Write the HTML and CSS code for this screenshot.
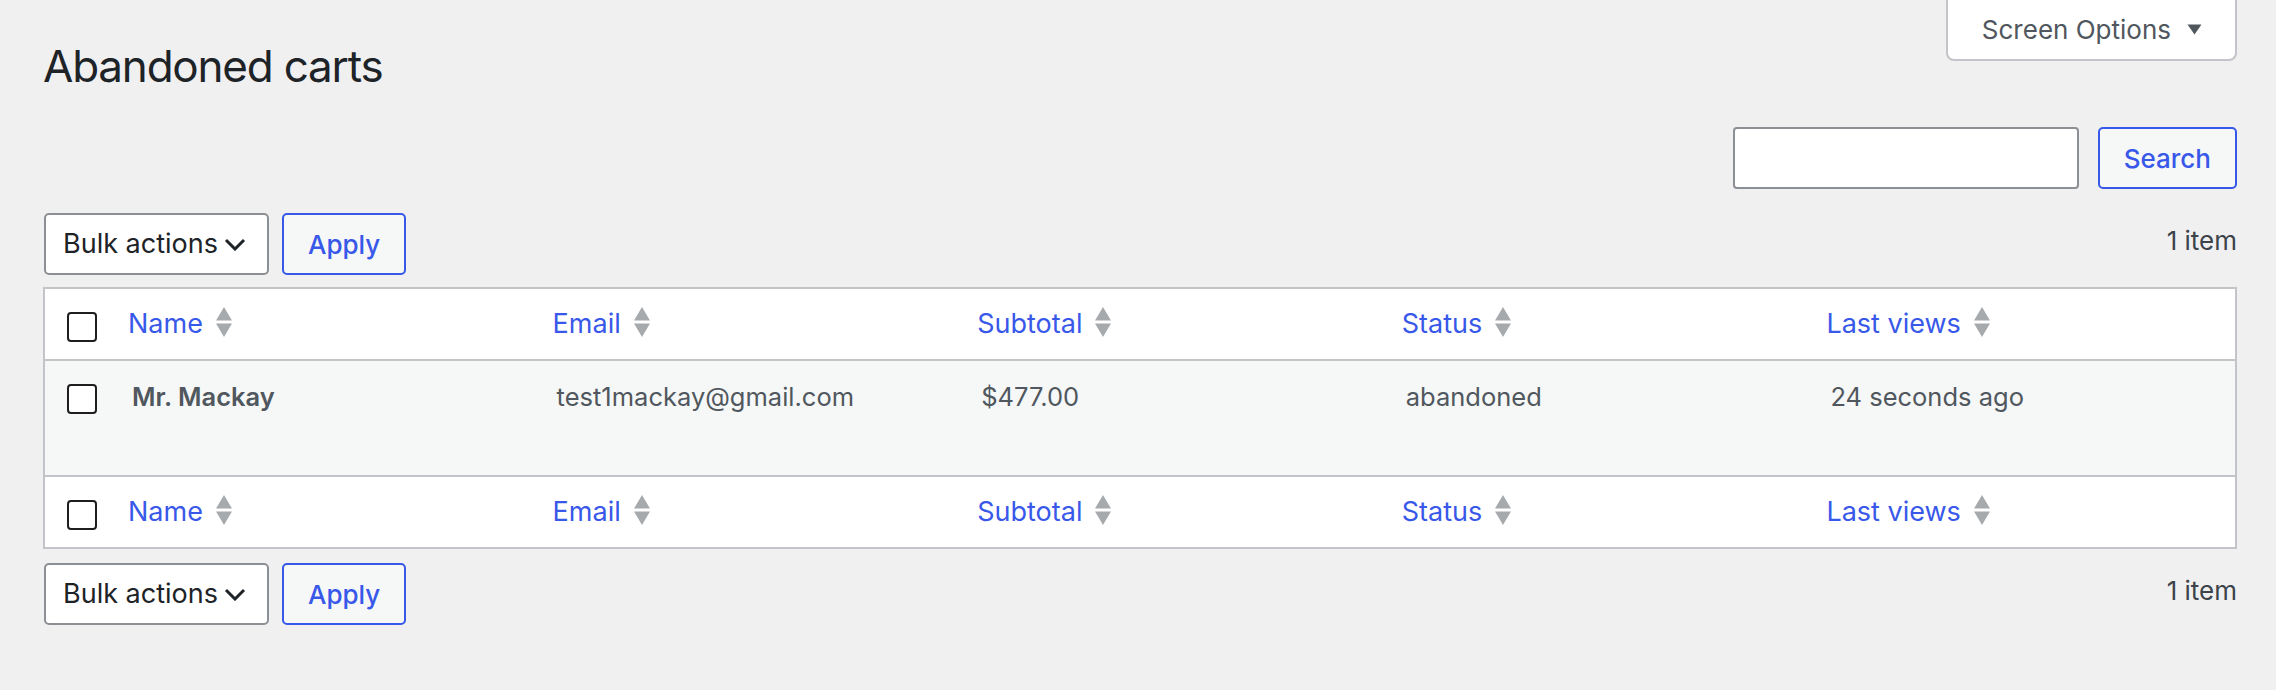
FILE: index.html
```html
<!DOCTYPE html>
<html lang="en">
<head>
<meta charset="utf-8">
<title>Abandoned carts</title>
<link rel="stylesheet" href="styles.css">
</head>
<body>
<div class="page">
  <div class="head">
    <h1 class="title">Abandoned carts</h1>
    <button class="screen-options" type="button">Screen Options
      <svg class="tri" width="15" height="11" viewBox="0 0 15 11"><path d="M0.5 0.5 H14.5 L7.5 10.5 Z" fill="#50575e"/></svg>
    </button>
  </div>

  <form class="search-box">
    <input type="search" class="search-input" aria-label="Search">
    <button class="btn" type="button">Search</button>
  </form>

  <div class="tablenav tablenav-top">
    <div class="bulk">
      <div class="select"><span class="select-label">Bulk actions</span>
        <svg class="chev" width="22" height="13" viewBox="0 0 22 13"><path d="M2 2 L11 11 L20 2" fill="none" stroke="#1d2327" stroke-width="3"/></svg>
      </div>
      <button class="btn" type="button">Apply</button>
    </div>
    <span class="count">1 item</span>
  </div>

  <table class="list">
    <colgroup>
      <col class="col-check">
      <col><col><col><col><col>
    </colgroup>
    <thead>
      <tr>
        <th class="check"><input type="checkbox" class="cb" aria-label="Select all"></th>
        <th><a class="sort" href="#">Name<svg class="arrows" width="16" height="30" viewBox="0 0 16 30"><path d="M8 0 L16 13.5 H0 Z M0 16.5 H16 L8 30 Z" fill="#a7aaad"/></svg></a></th>
        <th><a class="sort" href="#">Email<svg class="arrows" width="16" height="30" viewBox="0 0 16 30"><path d="M8 0 L16 13.5 H0 Z M0 16.5 H16 L8 30 Z" fill="#a7aaad"/></svg></a></th>
        <th><a class="sort" href="#">Subtotal<svg class="arrows" width="16" height="30" viewBox="0 0 16 30"><path d="M8 0 L16 13.5 H0 Z M0 16.5 H16 L8 30 Z" fill="#a7aaad"/></svg></a></th>
        <th><a class="sort" href="#">Status<svg class="arrows" width="16" height="30" viewBox="0 0 16 30"><path d="M8 0 L16 13.5 H0 Z M0 16.5 H16 L8 30 Z" fill="#a7aaad"/></svg></a></th>
        <th><a class="sort" href="#">Last views<svg class="arrows" width="16" height="30" viewBox="0 0 16 30"><path d="M8 0 L16 13.5 H0 Z M0 16.5 H16 L8 30 Z" fill="#a7aaad"/></svg></a></th>
      </tr>
    </thead>
    <tbody>
      <tr>
        <td class="check"><input type="checkbox" class="cb" aria-label="Select Mr. Mackay"></td>
        <td><strong class="name">Mr. Mackay</strong></td>
        <td>test1mackay@gmail.com</td>
        <td>$477.00</td>
        <td>abandoned</td>
        <td>24 seconds ago</td>
      </tr>
    </tbody>
    <tfoot>
      <tr>
        <th class="check"><input type="checkbox" class="cb" aria-label="Select all"></th>
        <th><a class="sort" href="#">Name<svg class="arrows" width="16" height="30" viewBox="0 0 16 30"><path d="M8 0 L16 13.5 H0 Z M0 16.5 H16 L8 30 Z" fill="#a7aaad"/></svg></a></th>
        <th><a class="sort" href="#">Email<svg class="arrows" width="16" height="30" viewBox="0 0 16 30"><path d="M8 0 L16 13.5 H0 Z M0 16.5 H16 L8 30 Z" fill="#a7aaad"/></svg></a></th>
        <th><a class="sort" href="#">Subtotal<svg class="arrows" width="16" height="30" viewBox="0 0 16 30"><path d="M8 0 L16 13.5 H0 Z M0 16.5 H16 L8 30 Z" fill="#a7aaad"/></svg></a></th>
        <th><a class="sort" href="#">Status<svg class="arrows" width="16" height="30" viewBox="0 0 16 30"><path d="M8 0 L16 13.5 H0 Z M0 16.5 H16 L8 30 Z" fill="#a7aaad"/></svg></a></th>
        <th><a class="sort" href="#">Last views<svg class="arrows" width="16" height="30" viewBox="0 0 16 30"><path d="M8 0 L16 13.5 H0 Z M0 16.5 H16 L8 30 Z" fill="#a7aaad"/></svg></a></th>
      </tr>
    </tfoot>
  </table>

  <div class="tablenav tablenav-bottom">
    <div class="bulk">
      <div class="select"><span class="select-label">Bulk actions</span>
        <svg class="chev" width="22" height="13" viewBox="0 0 22 13"><path d="M2 2 L11 11 L20 2" fill="none" stroke="#1d2327" stroke-width="3"/></svg>
      </div>
      <button class="btn" type="button">Apply</button>
    </div>
    <span class="count">1 item</span>
  </div>
</div>
</body>
</html>
```

FILE: styles.css
```css
* { box-sizing: border-box; }

html, body { margin: 0; }

body {
  background: #f0f0f1;
  font-family: Inter, "Liberation Sans", sans-serif;
  font-size: 26px;
  line-height: 36px;
  color: #3c434a;
}

.page {
  padding: 0 39px 0 43px;
}

.head {
  display: flex;
  justify-content: space-between;
  align-items: flex-start;
}

.title {
  margin: 0;
  padding-top: 36px;
  font-size: 44px;
  line-height: 60px;
  letter-spacing: -1.2px;
  font-weight: 400;
  color: #1d2327;
}

.screen-options {
  display: flex;
  align-items: center;
  gap: 16px;
  height: 61px;
  padding: 0 33px 0 34px;
  background: #fff;
  border: 2px solid #c3c4c7;
  border-top: 0;
  border-radius: 0 0 8px 8px;
  font: inherit;
  color: #50575e;
}

.tri { display: block; }

.search-box {
  display: flex;
  justify-content: flex-end;
  gap: 19px;
  margin: 31px 0 0;
}

.search-input {
  width: 346px;
  height: 62px;
  margin: 0;
  background: #fff;
  border: 2px solid #8c8f94;
  border-radius: 4px;
  font: inherit;
}

.btn {
  height: 62px;
  margin: 0;
  padding: 0 24px;
  background: #f6f7f7;
  border: 2px solid #3858e9;
  border-radius: 5px;
  color: #3858e9;
  font-family: inherit;
  font-size: 26px;
  font-weight: 500;
}

.tablenav {
  display: flex;
  justify-content: space-between;
  align-items: flex-start;
}

.tablenav-top { margin-top: 24px; }
.tablenav-bottom { margin-top: 14px; }

.bulk {
  display: flex;
  gap: 13px;
  margin-left: 1px;
}

.select {
  display: flex;
  align-items: center;
  justify-content: space-between;
  width: 225px;
  height: 62px;
  padding: 0 21px 0 17px;
  background: #fff;
  border: 2px solid #8c8f94;
  border-radius: 5px;
  font-size: 27px;
  color: #1d2327;
}

.select-label { white-space: nowrap; }

.chev { display: block; flex: none; }

.count {
  margin-top: 10px;
  color: #3c434a;
}

.list {
  width: 100%;
  margin-top: 12px;
  border-collapse: separate;
  border-spacing: 0;
  table-layout: fixed;
  background: #fff;
  border: 2px solid #c3c4c7;
}

.col-check { width: 67px; }

.list th {
  text-align: left;
  font-weight: 400;
  font-size: 27px;
  vertical-align: top;
  padding: 17px 0 17px 16px;
}

.list thead th { border-bottom: 2px solid #c3c4c7; }
.list tfoot th { border-top: 2px solid #c3c4c7; }

.list td {
  vertical-align: top;
  padding: 18px 0 60px 20px;
  background: #f6f7f7;
  color: #50575e;
  font-size: 25.5px;
}

.list th.check,
.list td.check {
  padding: 23px 0 0 22px;
}

.cb {
  appearance: none;
  -webkit-appearance: none;
  display: block;
  width: 30px;
  height: 30px;
  margin: 0;
  background: #fff;
  border: 2px solid #1e1e1e;
  border-radius: 4px;
}

.sort {
  color: #3858e9;
  text-decoration: none;
  white-space: nowrap;
}

.arrows {
  vertical-align: -4px;
  margin-left: 13px;
}

.name {
  font-weight: 600;
  color: #50575e;
}
```
